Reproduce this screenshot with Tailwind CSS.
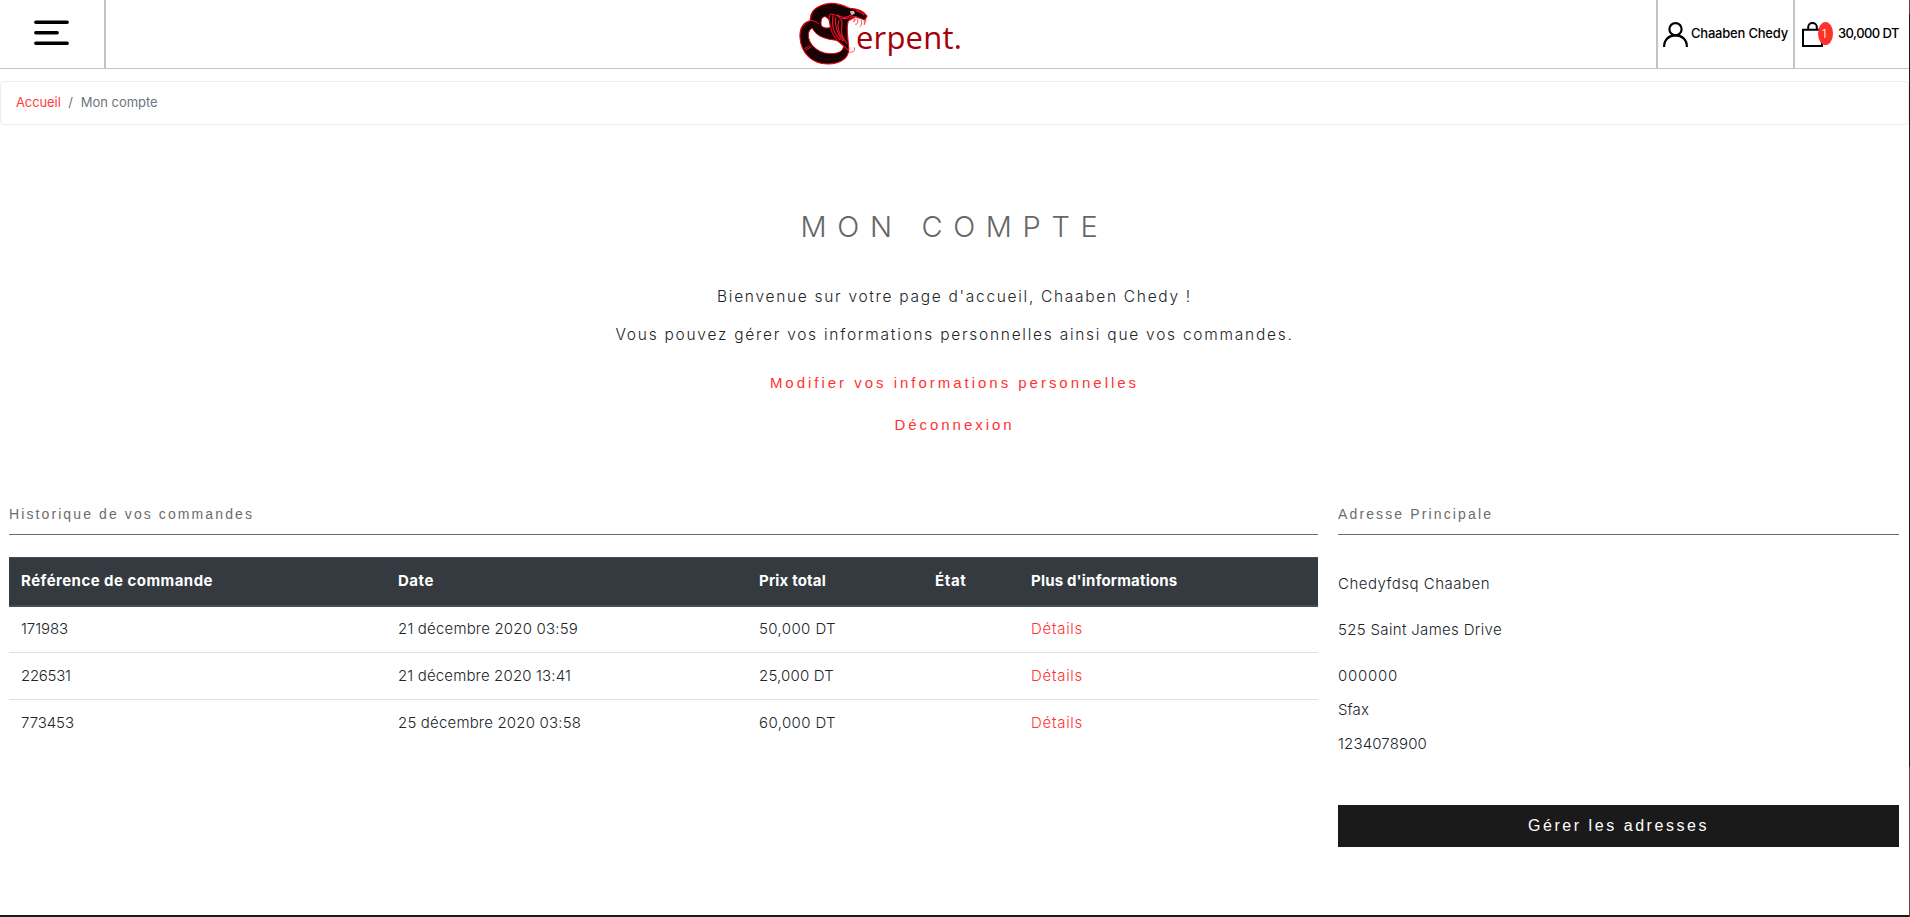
<!DOCTYPE html>
<html lang="fr">
<head>
<meta charset="utf-8">
<title>Mon compte</title>
<script src="https://cdn.jsdelivr.net/npm/@tailwindcss/browser@4"></script>
</head>
<body class="bg-[#1a1a1a] font-['Inter',sans-serif] font-light text-[#212529]">
<div class="flex h-[917px] w-[1910px] overflow-hidden">
<div class="flex h-[915px] w-[1909px] flex-col bg-white">
  <header class="flex h-[69px] shrink-0 border-b border-[#c3c3c3]">
    <div class="flex w-[106px] items-center border-r-2 border-[#c3c3c3] pl-[34px]">
      <svg class="mb-[3px]" width="35" height="26" viewBox="0 0 35 26"><path d="M1.8 2.2H33.2M1.8 12.7H23.2M1.8 23.2H33.2" stroke="#000" stroke-width="3.4" stroke-linecap="round"/></svg>
    </div>
    <div class="flex flex-1 pl-[689px]">
      <svg class="h-[68px] w-[61px] shrink-0 overflow-visible" viewBox="0 0 183 204">
        <path d="M166 26C130 8 98 6 75 18C52 28 45 44 46 62C24 68 14 88 15 112C18 160 52 192 98 192C140 192 164 172 161 142C156 116 130 80 122 40L160 50Z" fill="#150204" stroke="#e3000f" stroke-width="3.5" stroke-linejoin="round"/>
        <path d="M79 78C76 62 80 51 89 50C99 51 107 64 106 82C98 86 86 84 79 78Z" fill="#fff" stroke="#e3000f" stroke-width="3"/>
        <path d="M52 84C60 104 84 116 112 119C126 120 136 126 146 138C144 156 126 162 102 161C64 158 38 128 40 102C41 94 45 88 52 84Z" fill="#fff" stroke="#e3000f" stroke-width="3"/>
        <path d="M46 62C56 60 64 66 72 72M28 146L46 136M32 150L50 140" fill="none" stroke="#f0142a" stroke-width="3"/>
        <path d="M56 36Q80 18 112 24M54 66Q66 96 112 108M26 96Q20 130 52 162Q90 190 140 172" fill="none" stroke="#7c000c" stroke-width="2.5" stroke-dasharray="3 3"/>
        <path d="M104 42C100 64 108 98 122 116C136 132 148 136 160 152C164 130 150 92 160 62L182 50L210 60L216 48C206 32 186 26 160 24L140 32Z" fill="#150204"/>
        <path d="M104 42C100 64 108 98 122 116C136 132 148 136 160 152C164 130 150 92 160 62L182 50L210 60L216 48C206 32 186 26 164 25" fill="none" stroke="#e3000f" stroke-width="3.5"/>
        <path d="M106 42C128 44 146 56 140 80C134 108 152 124 156 132M114 46C110 76 114 98 136 120M122 52C118 80 126 100 144 124M132 60C122 84 134 104 148 122M140 54C154 62 166 48 184 50M126 44C144 60 160 50 176 42M182 32Q200 36 208 46" fill="none" stroke="#f0142a" stroke-width="3.5"/>
        <path d="M164 34L176 32L180 40L170 46Z" fill="#d8b9b9"/>
        <path d="M178 54L176 66L184 56M188 56C190 66 186 76 180 72M198 60C202 68 200 78 194 80M208 60L208 74L213 60M162 156C176 160 182 148 177 142" fill="#fff" stroke="#f33" stroke-width="2.5"/>
      </svg>
      <div class="pt-[12px] font-['Open_Sans',sans-serif] text-[31px] font-normal leading-[50px] tracking-[0.19px] text-[#a30008]">erpent.</div>
    </div>
    <div class="flex w-[139px] items-center border-l-2 border-r-2 border-[#c3c3c3] pl-[5px] text-[13px] font-medium text-black">
      <svg class="mr-[3px]" width="25" height="25" viewBox="0 0 25 25" fill="none" stroke="#000" stroke-width="2.2"><circle cx="12.5" cy="7.2" r="6.1"/><path d="M1.1 25C1.1 17.5 6 13.4 12.5 13.4S23.9 17.5 23.9 25"/></svg>
      <span class="whitespace-nowrap tracking-[-0.21px]">Chaaben Chedy</span>
    </div>
    <div class="relative flex w-[114px] items-center pl-[7px] text-[13px] font-medium text-black">
      <svg width="21" height="25" viewBox="0 0 21 25" fill="none" stroke="#000" stroke-width="2"><path d="M1 7.8H20V24H1Z"/><path d="M6.2 7.5V5.2A4.3 4.3 0 0 1 14.8 5.2V7.5"/></svg>
      <span class="absolute left-[23px] top-[22px] h-[23px] w-[15px] rounded-[50%] bg-[#ff302c] pr-[3px] text-center text-[12px] font-light leading-[23px] text-white">1</span>
      <span class="ml-[15px] whitespace-nowrap tracking-[-0.55px]">30,000 DT</span>
    </div>
  </header>

  <nav class="mt-[12px] flex h-[44px] shrink-0 items-center rounded border border-[#ececec] pl-[15px] text-[13px] font-normal text-[#6c757d]">
    <a class="tracking-[-0.1px] text-[#ff3b3b]">Accueil</a><span class="w-[20px] text-center">/</span><span class="tracking-[-0.02px]">Mon compte</span>
  </nav>

  <main class="flex-1">
    <section class="text-center">
      <h1 class="mt-[80px] h-[44px] text-[29px] leading-[44px] tracking-[10.66px] text-[#666]">MON COMPTE</h1>
      <p class="mt-[36px] h-[24px] text-[15.5px] leading-[24px] tracking-[1.7px]">Bienvenue sur votre page d'accueil, Chaaben Chedy !</p>
      <p class="mt-[14px] h-[24px] text-[15.5px] leading-[24px] tracking-[1.74px]">Vous pouvez gérer vos informations personnelles ainsi que vos commandes.</p>
      <div class="font-['Liberation_Sans',sans-serif] text-[15px] font-normal leading-[24px] text-[#ff3333]">
        <p class="mt-[24px] tracking-[2.98px]">Modifier vos informations personnelles</p>
        <p class="mt-[18px] tracking-[2.95px]">Déconnexion</p>
      </div>
    </section>

    <div class="mt-[65px] flex gap-[20px] pl-[9px]">
      <section class="w-[1309px]">
        <h2 class="h-[33px] border-b border-[#6c6c6c] font-['Liberation_Sans',sans-serif] text-[14px] font-normal leading-[24px] tracking-[2.1px] text-[#6c6c6c]">Historique de vos commandes</h2>
        <table class="mt-[22px] w-full table-fixed border-collapse text-left text-[15px]">
          <colgroup><col class="w-[377px]"><col class="w-[361px]"><col class="w-[176px]"><col class="w-[96px]"><col></colgroup>
          <thead><tr class="h-[48px] border-t border-b-2 border-[#454d55] bg-[#343a40] font-semibold text-white">
            <th class="pl-[12px] tracking-[0.46px]">Référence de commande</th>
            <th class="pl-[12px] tracking-[0.54px]">Date</th>
            <th class="pl-[12px] tracking-[0.18px]">Prix total</th>
            <th class="pl-[12px] tracking-[0.6px]">État</th>
            <th class="pl-[12px] tracking-[0.18px]">Plus d'informations</th>
          </tr></thead>
          <tbody>
            <tr class="h-[47px]">
              <td class="pl-[12px] tracking-[-0.08px]">171983</td>
              <td class="pl-[12px] tracking-[0.18px]">21 décembre 2020 03:59</td>
              <td class="pl-[12px] tracking-[0.39px]">50,000 DT</td>
              <td></td>
              <td class="pl-[12px] tracking-[0.71px] text-[#ff3333]">Détails</td>
            </tr>
            <tr class="h-[47px] border-t border-[#dee2e6]">
              <td class="pl-[12px] tracking-[-0.3px]">226531</td>
              <td class="pl-[12px] tracking-[0.15px]">21 décembre 2020 13:41</td>
              <td class="pl-[12px] tracking-[0.18px]">25,000 DT</td>
              <td></td>
              <td class="pl-[12px] tracking-[0.71px] text-[#ff3333]">Détails</td>
            </tr>
            <tr class="h-[47px] border-t border-[#dee2e6]">
              <td class="pl-[12px] tracking-[-0.06px]">773453</td>
              <td class="pl-[12px] tracking-[0.18px]">25 décembre 2020 03:58</td>
              <td class="pl-[12px] tracking-[0.38px]">60,000 DT</td>
              <td></td>
              <td class="pl-[12px] tracking-[0.71px] text-[#ff3333]">Détails</td>
            </tr>
          </tbody>
        </table>
      </section>
      <section class="w-[561px]">
        <h2 class="h-[33px] border-b border-[#6c6c6c] font-['Liberation_Sans',sans-serif] text-[14px] font-normal leading-[24px] tracking-[2.13px] text-[#6c6c6c]">Adresse Principale</h2>
        <div class="mt-[37px] flex flex-col text-[15px] leading-[24px]">
          <p class="tracking-[0.49px]">Chedyfdsq Chaaben</p>
          <p class="mt-[22px] tracking-[0.33px]">525 Saint James Drive</p>
          <p class="mt-[22px] tracking-[0.73px]">000000</p>
          <p class="mt-[10px] tracking-[0.09px]">Sfax</p>
          <p class="mt-[10px] tracking-[0.15px]">1234078900</p>
        </div>
        <button class="mt-[49px] block h-[42px] w-full bg-[#1a1a1a] font-['Liberation_Sans',sans-serif] text-[16px] font-normal tracking-[2.55px] text-white">Gérer les adresses</button>
      </section>
    </div>
  </main>
</div>
<div class="flex h-full w-px flex-col">
  <div class="h-[14px] bg-[#7a3a44]"></div>
  <div class="h-[753px] bg-[#1b1c24]"></div>
  <div class="flex-1 bg-[#6e4046]"></div>
</div>
</div>
</body>
</html>
